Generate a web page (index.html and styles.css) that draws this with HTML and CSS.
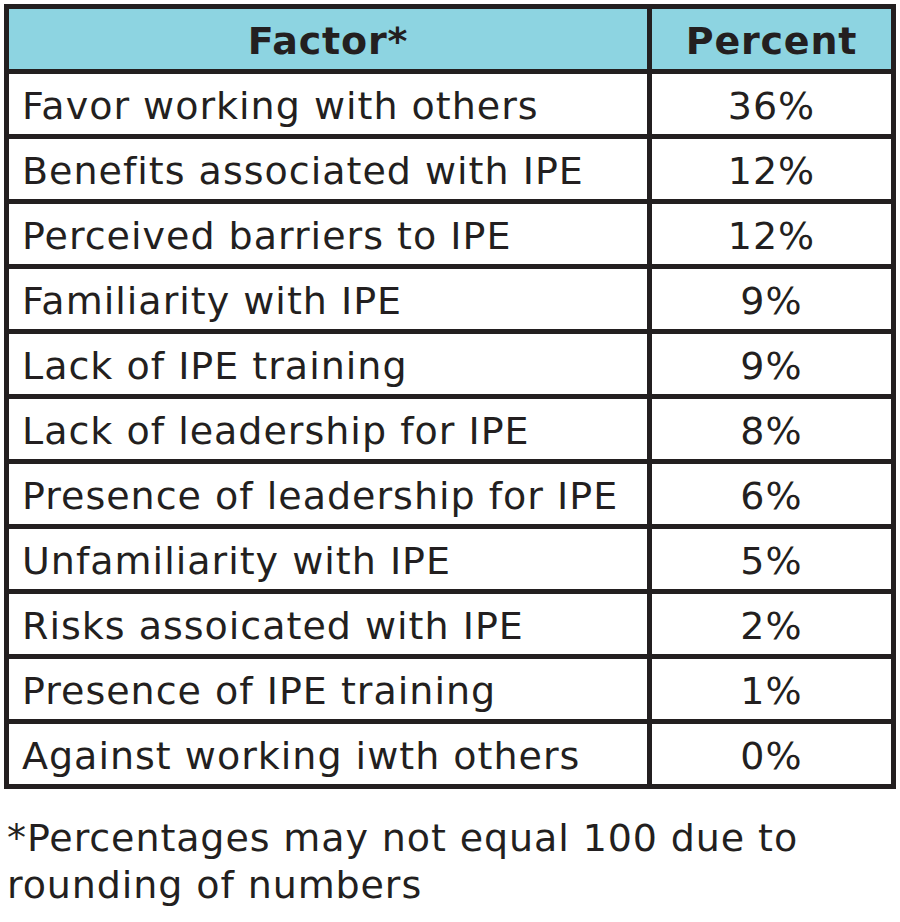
FILE: index.html
```html
<!DOCTYPE html>
<html lang="en">
<head>
<meta charset="utf-8">
<title>IPE Factors</title>
<link rel="stylesheet" href="styles.css">
</head>
<body>
<div class="page">
  <table class="factors">
    <thead>
      <tr><th class="col-factor">Factor*</th><th class="col-pct">Percent</th></tr>
    </thead>
    <tbody>
      <tr><td class="col-factor">Favor working with others</td><td class="col-pct">36%</td></tr>
      <tr><td class="col-factor">Benefits associated with IPE</td><td class="col-pct">12%</td></tr>
      <tr><td class="col-factor">Perceived barriers to IPE</td><td class="col-pct">12%</td></tr>
      <tr><td class="col-factor">Familiarity with IPE</td><td class="col-pct">9%</td></tr>
      <tr><td class="col-factor">Lack of IPE training</td><td class="col-pct">9%</td></tr>
      <tr><td class="col-factor">Lack of leadership for IPE</td><td class="col-pct">8%</td></tr>
      <tr><td class="col-factor">Presence of leadership for IPE</td><td class="col-pct">6%</td></tr>
      <tr><td class="col-factor">Unfamiliarity with IPE</td><td class="col-pct">5%</td></tr>
      <tr><td class="col-factor">Risks assoicated with IPE</td><td class="col-pct">2%</td></tr>
      <tr><td class="col-factor">Presence of IPE training</td><td class="col-pct">1%</td></tr>
      <tr><td class="col-factor">Against working iwth others</td><td class="col-pct">0%</td></tr>
    </tbody>
  </table>
  <p class="note">*Percentages may not equal 100 due to rounding of numbers</p>
</div>
</body>
</html>
```

FILE: styles.css
```css
html, body {
  margin: 0;
  padding: 0;
  background: #ffffff;
}

body {
  font-family: "DejaVu Sans", Verdana, sans-serif;
  color: #231f20;
}

.page {
  padding: 4px 4px 0 4px;
}

.factors {
  border-collapse: separate;
  border-spacing: 0;
  border-top: 5px solid #231f20;
  border-left: 5px solid #231f20;
  font-size: 38px;
  letter-spacing: 1px;
}

.factors th,
.factors td {
  border-right: 5px solid #231f20;
  border-bottom: 5px solid #231f20;
  height: 56px;
  padding: 4px 0 0 0;
  vertical-align: middle;
  line-height: 1;
  white-space: nowrap;
}

.factors th {
  background: #8dd4e1;
  font-weight: bold;
  text-align: center;
  letter-spacing: 0.8px;
}

.factors td.col-factor {
  text-align: left;
  padding-left: 13px;
  width: 625px;
}

.factors th.col-factor {
  width: 638px;
}

.factors .col-pct {
  width: 239px;
  text-align: center;
}

.note {
  margin: 26px 0 0 3px;
  font-size: 38px;
  letter-spacing: 0.9px;
  line-height: 47px;
  width: 887px;
}
```
